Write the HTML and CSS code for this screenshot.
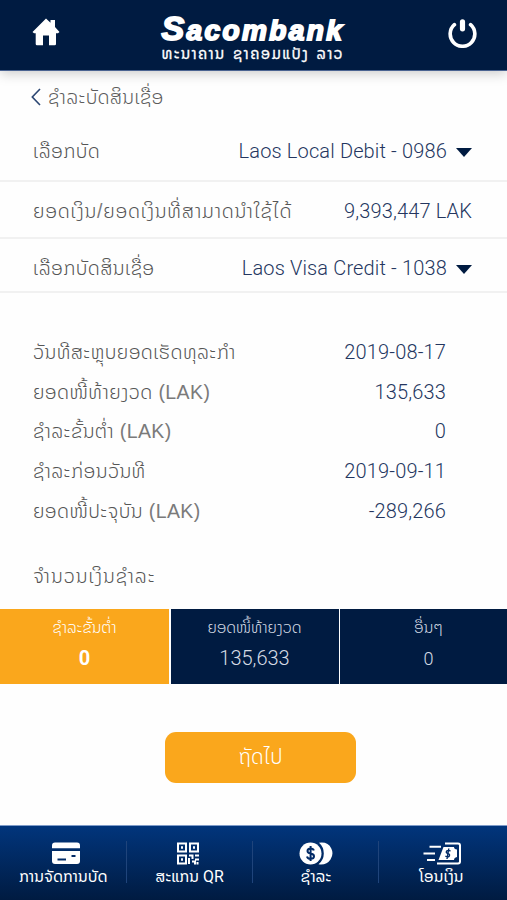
FILE: index.html
```
<!DOCTYPE html>
<html lang="lo">
<head>
  <meta charset="UTF-8" />
  <title>Sacombank Lao</title>
  <link rel="stylesheet" href="styles.css">
</head>
<body>

  <header>
    <svg class="home" viewBox="0 0 28 28">
      <path d="M14 0.5 18.5 4.8V2h4.5v7L27.5 14 26 15.2H24V26q0 1.3-1.3 1.3H17V17.5H11V27.3H5Q3.7 27.3 3.7 26V15.2H2L0.5 14Z" fill="#fff"/>
    </svg>
    <div class="brand">
      <div class="logo"><span>S</span>acombank</div>
      <div class="logo-sub">ທະນາຄານ ຊາຄອມແບັງ ລາວ</div>
    </div>
    <svg class="power" viewBox="0 0 28 28" fill="none" stroke="#fff" stroke-linecap="round">
      <path d="M6.2 5.4A11.9 11.9 0 1 0 21.8 5.4" stroke-width="3.5"/>
      <path d="M14 2.7V9.5" stroke-width="5"/>
    </svg>
  </header>

  <main>
    <div class="title">
      <svg viewBox="0 0 10 18" fill="none" stroke="#2b4672" stroke-width="1.6"><path d="M9 1 1.3 9 9 17"/></svg>
      <h1>ຊຳລະບັດສິນເຊື່ອ</h1>
    </div>

    <div class="row row-debit">
      <span class="label">ເລືອກບັດ</span>
      <span class="value">Laos Local Debit - 0986</span>
      <i class="arrow"></i>
    </div>
    <div class="row row-balance">
      <span class="label">ຍອດເງິນ<em>/</em>ຍອດເງິນທີ່ສາມາດນຳໃຊ້ໄດ້</span>
      <span class="value">9,393,447 LAK</span>
    </div>
    <div class="row row-credit">
      <span class="label">ເລືອກບັດສິນເຊື່ອ</span>
      <span class="value">Laos Visa Credit - 1038</span>
      <i class="arrow"></i>
    </div>

    <div class="details">
      <div class="item"><span class="label">ວັນທີສະຫຼຸບຍອດເຮັດທຸລະກຳ</span><span class="value">2019-08-17</span></div>
      <div class="item"><span class="label">ຍອດໜີ້ທ້າຍງວດ <em>(LAK)</em></span><span class="value">135,633</span></div>
      <div class="item"><span class="label">ຊຳລະຂັ້ນຕ່ຳ <em>(LAK)</em></span><span class="value">0</span></div>
      <div class="item"><span class="label">ຊຳລະກ່ອນວັນທີ</span><span class="value">2019-09-11</span></div>
      <div class="item"><span class="label">ຍອດໜີ້ປະຈຸບັນ <em>(LAK)</em></span><span class="value">-289,266</span></div>
    </div>

    <div class="amount-title label">ຈຳນວນເງິນຊຳລະ</div>

    <div class="options">
      <div class="option active"><span>ຊຳລະຂັ້ນຕ່ຳ</span><b>0</b></div>
      <div class="option"><span>ຍອດໜີ້ທ້າຍງວດ</span><b>135,633</b></div>
      <div class="option other"><span>ອື່ນໆ</span><b>0</b></div>
    </div>

    <button>ຖັດໄປ</button>
  </main>

  <footer>
    <div class="tab cards">
      <svg width="30" height="23" viewBox="0 0 30 23">
        <path d="M4 0.5H26Q29 0.5 29 3.5V6.3H1V3.5Q1 0.5 4 0.5Z" fill="#fff"/>
        <path d="M1 9H29V19Q29 22 26 22H4Q1 22 1 19Z" fill="#fff"/>
        <path d="M6.5 17.5H15M20.5 14H24.5" stroke="#012a66" stroke-width="2"/>
      </svg>
      <span>ການຈັດການບັດ</span>
    </div>
    <div class="tab scan">
      <svg width="24" height="23" viewBox="0 0 24 23" fill="none" stroke="#fff" stroke-width="2">
        <path d="M2 1.5H10V9.5H2ZM14 1.5H22V9.5H14ZM2 13.5H10V21.5H2Z"/>
        <path d="M5 5.5H7M17 5.5H19M5 17.5H7" stroke-width="2.6"/>
        <path d="M13 13.5H16.5V17M19 13.5H23M19 17.5H23M13 16V22M16 19.5H19V22.5M21.5 20V22.5"/>
      </svg>
      <span>ສະແກນ QR</span>
    </div>
    <div class="tab pay">
      <svg width="34" height="23" viewBox="0 0 34 23">
        <circle cx="11.5" cy="11.5" r="11" fill="#fff"/>
        <path d="M20 .8Q29 -.5 32.3 6.5Q35 12 31.5 17.5Q27.5 23.5 19.5 22.3Q24.8 18 24.8 11.5Q24.8 5 20 .8Z" fill="#fff"/>
        <path d="M14.8 8.4Q14.3 6.4 11.5 6.4 8.5 6.4 8.5 8.9 8.5 11 11.5 11.5 15 12 15 14.3 15 16.8 11.6 16.8 8.5 16.8 8 14.5M11.6 4V19" fill="none" stroke="#012a66" stroke-width="2"/>
      </svg>
      <span>ຊຳລະ</span>
    </div>
    <div class="tab transfer">
      <svg width="38" height="23" viewBox="0 0 38 23" fill="none" stroke="#fff" stroke-width="2">
        <path d="M6.5 4.7H18M0.5 11.5H12M4 18H12M22 1.5H35Q37 1.5 37 3.5V19.5Q37 21.5 35 21.5H14"/>
        <path d="M20.5 5H31Q31 7 34 7.5V15Q31 15.5 31 18H15.5Z" fill="#fff" stroke="none"/>
        <path d="M27.5 9Q24.5 7.7 23.5 9.3 22.7 11 25 11.6 27.3 12.2 26.2 14.2 25 15.6 22.4 14.2M25.8 6.5 24 17" stroke="#012a66" stroke-width="1.4"/>
      </svg>
      <span>ໂອນເງິນ</span>
    </div>
  </footer>

</body>
</html>
```
FILE: styles.css
```
* {
  box-sizing: border-box;
  margin: 0;
  padding: 0;
}

body {
  width: 507px;
  height: 900px;
  overflow: hidden;
  display: flex;
  flex-direction: column;
  font-family: Roboto, "Noto Sans Lao", "DejaVu Sans", sans-serif;
  background: #fefefe;
  white-space: nowrap;
}

header {
  height: 71px;
  padding: 0 30px 0 32px;
  display: flex;
  justify-content: space-between;
  background: #001b41;
  border-bottom: 1px solid #4a6391;
  box-shadow: 0 2px 12px rgba(0,0,0,0.22);
}

.home {
  width: 28px;
  height: 28px;
  margin-top: 18px;
}

.power {
  width: 29px;
  height: 29px;
  margin-top: 19px;
}

.brand {
  width: 185px;
  padding-top: 15px;
  color: #fff;
}

.logo {
  height: 32px;
  line-height: 27px;
  font-family: "Liberation Sans", Arial, sans-serif;
  font-size: 28px;
  font-weight: bold;
  font-style: italic;
  letter-spacing: 2.4px;
  -webkit-text-stroke: 1.9px #fff;
}

.logo span {
  font-size: 34px;
}

.logo-sub {
  font-size: 15px;
  line-height: 15px;
  letter-spacing: 1.5px;
  word-spacing: 2px;
  -webkit-text-stroke: 0.3px #fff;
}

main {
  height: 754px;
  display: flex;
  flex-direction: column;
}

.title {
  height: 52px;
  padding: 0 31px;
  display: flex;
  align-items: center;
  gap: 7px;
}

.title svg {
  width: 10px;
  height: 18px;
}

h1 {
  font-size: 19.5px;
  font-weight: 300;
  letter-spacing: 0.3px;
  color: #5c5c5c;
}

.row {
  padding: 0 35px 0 33px;
  display: flex;
  align-items: center;
  border-bottom: 2px solid #f1f1f1;
}

.row-debit {
  height: 59px;
  padding-bottom: 2px;
}

.row-balance {
  height: 57px;
  padding-top: 2px;
}

.row-credit {
  height: 54px;
  padding-top: 5px;
}

.label {
  font-family: "Liberation Sans", "Noto Sans Lao", "DejaVu Sans", sans-serif;
  font-size: 19.5px;
  font-weight: 300;
  letter-spacing: 0.4px;
  color: #555;
}

.label em {
  font-style: normal;
  color: #7a7a7a;
}

.row-balance .label {
  letter-spacing: 0.75px;
}

.value {
  margin-left: auto;
  font-size: 20px;
  font-weight: 300;
  letter-spacing: 0.15px;
  color: #24365f;
}

.arrow {
  margin: 4px 0 0 9px;
  border: 8.5px solid transparent;
  border-top: 9px solid #001b41;
  border-bottom: 0;
}

.details {
  margin-top: 39px;
  padding: 0 61px 0 33px;
}

.item {
  height: 39.7px;
  display: flex;
  align-items: center;
}

.amount-title {
  height: 47px;
  margin-top: 23px;
  padding-left: 33px;
  line-height: 47px;
  letter-spacing: 1px;
}

.options {
  height: 75px;
  margin-top: 9px;
  display: grid;
  grid-template-columns: 169px 168px 1fr;
  gap: 1.5px;
}

.option {
  padding-top: 8px;
  display: flex;
  flex-direction: column;
  align-items: center;
  background: #001b41;
  color: #d5dbe5;
}

.option span {
  font-size: 15.9px;
  font-weight: 300;
  line-height: 22px;
}

.option b {
  font-size: 20px;
  font-weight: 300;
  line-height: 39px;
}

.option.other {
  padding-left: 10px;
}

.option.active {
  background: #faa71c;
  color: #fff;
}

.active b {
  font-weight: bold;
}

.other b {
  font-size: 18px;
}

button {
  width: 191px;
  height: 51px;
  margin: 48px 0 0 165px;
  padding-bottom: 2px;
  border: 0;
  border-radius: 11px;
  background: #faa71c;
  color: #fff;
  font-family: inherit;
  font-size: 20.5px;
  font-weight: 300;
}

footer {
  height: 75px;
  display: grid;
  grid-template-columns: 127px 126px 126px 128px;
  border-top: 1px solid #7f9cc9;
  background: linear-gradient(#01357c, #001b41);
}

.tab {
  padding-top: 16px;
  display: flex;
  flex-direction: column;
  align-items: center;
  color: #fff;
  background: linear-gradient(#1f447b, #1f447b) right 15px / 1px 42px no-repeat;
}

.tab.cards {
  padding-left: 5px;
}

.tab.cards span {
  margin-right: 5px;
}

.tab.scan {
  padding-right: 4px;
}

.tab.scan span {
  margin-left: 3px;
}

.tab.transfer {
  padding-right: 3px;
  background: none;
}

.tab span {
  font-size: 15.9px;
  line-height: 24px;
}
```
